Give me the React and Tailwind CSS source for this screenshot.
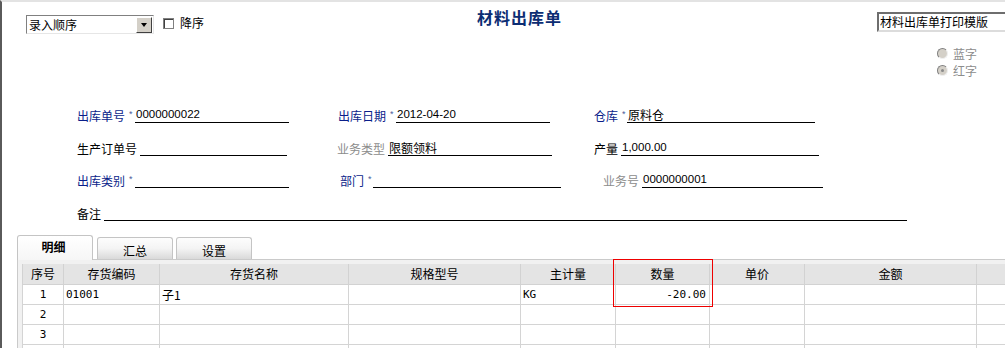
import React from "react";

const cjk = "font-['Noto_Sans_CJK_SC','Noto_Sans_CJK_JP',sans-serif]";
const sans = "font-['Liberation_Sans','Noto_Sans_CJK_SC',sans-serif]";
const mono = "font-['DejaVu_Sans_Mono','Noto_Sans_CJK_SC',monospace]";

function Field({ mlClass = "", labelClass, lineClass, label, colorClass = "text-black", star = false, value, valueCjk = false }) {
  return (
    <div className={`flex items-end ${mlClass}`}>
      <div className={`flex items-end shrink-0 ${labelClass}`}>
        <span className={`${cjk} text-[12px] leading-[14px] ${colorClass} whitespace-nowrap`}>{label}</span>
        {star && (
          <span className={`${sans} text-[9px] leading-[9px] text-[#4a5a9a] ml-[4px] self-start mt-[1px]`}>*</span>
        )}
      </div>
      <div className={`h-[16px] border-b border-black flex items-end pl-[1px] shrink-0 ${lineClass}`}>
        {value && (
          <span className={`${valueCjk ? cjk + " text-[12px]" : sans + " text-[11.5px]"} leading-[15px] text-black whitespace-nowrap`}>{value}</span>
        )}
      </div>
    </div>
  );
}

function Radio({ checked, label }) {
  return (
    <div className="flex items-center h-[17px]">
      <div className="w-[11px] h-[11px] rounded-full border border-t-[#808080] border-l-[#808080] border-r-[#f0f0f0] border-b-[#f0f0f0] bg-[#d4d0c8] flex items-center justify-center">
        {checked && <div className="w-[3px] h-[3px] rounded-full bg-[#8a8a8a]" />}
      </div>
      <span className={`${cjk} text-[12px] leading-[14px] text-[#8c8c8c] ml-[5px]`}>{label}</span>
    </div>
  );
}

const cols = [
  { w: "w-[41px]", h: "序号" },
  { w: "w-[96px]", h: "存货编码" },
  { w: "w-[189px]", h: "存货名称" },
  { w: "w-[172px]", h: "规格型号" },
  { w: "w-[95px]", h: "主计量" },
  { w: "w-[94px]", h: "数量" },
  { w: "w-[95px]", h: "单价" },
  { w: "w-[172px]", h: "金额" },
  { w: "w-[40px]", h: "" },
];

const rows = [
  ["1", "01001", "子1", "", "KG", "-20.00", "", "", ""],
  ["2", "", "", "", "", "", "", "", ""],
  ["3", "", "", "", "", "", "", "", ""],
  ["", "", "", "", "", "", "", "", ""],
];

const blue = "text-[#0a1e8a]";

export default function App() {
  return (
    <div className="w-[1005px] h-[348px] bg-white overflow-hidden relative border-l-2 border-l-[#5a5a5a] border-t-2 border-t-[#e3e3e3]">
      {/* header row */}
      <div className="flex items-start h-[43px]">
        <div className="w-[475px] pl-[24px] flex items-start shrink-0">
          <div className="mt-[13px] w-[128px] h-[19px] border border-t-[#808080] border-l-[#808080] border-r-[#e6e6e6] border-b-[#e6e6e6] flex items-center bg-white">
            <span className={`${cjk} text-[12px] leading-[14px] text-black pl-[2px] flex-1`}>录入顺序</span>
            <div className="w-[16px] h-[16px] mr-[1px] bg-[#d4d0c8] border border-t-[#ffffff] border-l-[#ffffff] border-r-[#404040] border-b-[#404040] flex items-center justify-center">
              <div className="w-0 h-0 border-l-[3.5px] border-r-[3.5px] border-t-[4px] border-l-transparent border-r-transparent border-t-black" />
            </div>
          </div>
          <div className="mt-[16px] ml-[9px] w-[11px] h-[11px] border border-[#808080] bg-white shadow-[inset_1px_1px_0_#404040]" />
          <span className={`${cjk} mt-[14px] ml-[6px] text-[12px] leading-[14px] text-black`}>降序</span>
        </div>
        <div className="w-[400px] shrink-0 mt-[4px]">
          <span className={`${cjk} text-[16px] leading-[20px] font-bold tracking-[1px] text-[#0c2d73]`}>材料出库单</span>
        </div>
        <div className="mt-[10px] w-[132px] h-[20px] shrink-0 border-2 border-t-[#6e6e6e] border-l-[#6e6e6e] border-r-[#dcdcdc] border-b-[#dcdcdc] flex items-center bg-white">
          <span className={`${cjk} text-[12px] leading-[14px] text-black pl-[1px] whitespace-nowrap`}>材料出库单打印模版</span>
        </div>
      </div>

      {/* radios */}
      <div className="pl-[935px] flex flex-col">
        <Radio label="蓝字" />
        <Radio checked label="红字" />
      </div>

      {/* form */}
      <div className="pl-[75px] flex flex-col">
        <div className="flex items-end mt-[28px]">
          <Field labelClass="w-[58px]" lineClass="w-[154px]" label="出库单号" colorClass={blue} star value="0000000022" />
          <Field mlClass="ml-[49px]" labelClass="w-[58px]" lineClass="w-[154px]" label="出库日期" colorClass={blue} star value="2012-04-20" />
          <Field mlClass="ml-[44px]" labelClass="w-[33px]" lineClass="w-[188px]" label="仓库" colorClass={blue} star value="原料仓" valueCjk />
        </div>
        <div className="flex items-end mt-[17px]">
          <Field labelClass="w-[63px]" lineClass="w-[147px]" label="生产订单号" />
          <Field mlClass="ml-[50px]" labelClass="w-[51px]" lineClass="w-[164px]" label="业务类型" colorClass="text-[#8c8c8c]" value="限额领料" valueCjk />
          <Field mlClass="ml-[42px]" labelClass="w-[27px]" lineClass="w-[198px]" label="产量" value="1,000.00" />
        </div>
        <div className="flex items-end mt-[16px]">
          <Field labelClass="w-[58px]" lineClass="w-[154px]" label="出库类别" colorClass={blue} star />
          <Field mlClass="ml-[51px]" labelClass="w-[33px]" lineClass="w-[188px]" label="部门" colorClass={blue} star />
          <Field mlClass="ml-[42px]" labelClass="w-[39px]" lineClass="w-[181px]" label="业务号" colorClass="text-[#8c8c8c]" value="0000000001" />
        </div>
        <div className="flex items-end mt-[17px]">
          <Field labelClass="w-[27px]" lineClass="w-[803px]" label="备注" />
        </div>
      </div>

      {/* tabs */}
      <div className="mt-[14px] pl-[15px] flex items-end h-[24px]">
        <div className="w-[76px] h-[25px] -mb-px relative z-10 rounded-t-[3px] border border-b-0 border-[#c4c4c4] bg-linear-to-b from-white to-[#f6f6f6] flex items-start justify-center pt-[4px]">
          <span className={`${cjk} text-[12px] leading-[14px] font-bold text-black pr-[3px]`}>明细</span>
        </div>
        <div className="ml-[4px] w-[76px] h-[22px] rounded-t-[3px] border border-b-0 border-[#c4c4c4] bg-linear-to-b from-[#fdfdfd] via-[#f4f4f4] to-[#d9d9d9] flex items-start justify-center pt-[6px]">
          <span className={`${cjk} text-[12px] leading-[14px] text-black`}>汇总</span>
        </div>
        <div className="ml-[3px] w-[76px] h-[22px] rounded-t-[3px] border border-b-0 border-[#c4c4c4] bg-linear-to-b from-[#fdfdfd] via-[#f4f4f4] to-[#d9d9d9] flex items-start justify-center pt-[6px]">
          <span className={`${cjk} text-[12px] leading-[14px] text-black`}>设置</span>
        </div>
      </div>

      {/* table */}
      <div className="ml-[15px] border-t border-l border-[#cacaca] bg-[#f1f1f1] pt-[4px] pl-[4px]">
        <div className="flex h-[21px] bg-[#e4e4e4] border-b border-[#d2d2d2]">
          {cols.map((c, i) => (
            <div key={i} className={`${c.w} shrink-0 border-l border-[#d2d2d2] flex items-center justify-center`}>
              <span className={`${cjk} text-[12px] leading-[14px] text-black`}>{c.h}</span>
            </div>
          ))}
        </div>
        {rows.map((r, ri) => (
          <div key={ri} className="flex h-[20px] bg-white border-b border-[#d4d4d4]">
            {cols.map((c, i) => {
              const v = r[i];
              let align = "justify-start pl-[2px]";
              if (i === 0) align = "justify-center";
              if (i === 5) align = "justify-end pr-[3px]";
              const isCjk = /[\u4e00-\u9fff]/.test(v);
              return (
                <div key={i} className={`${c.w} shrink-0 border-l border-[#d4d4d4] bg-white flex items-center ${align}`}>
                  {v && (
                    <span className={`${isCjk ? cjk + " text-[12px]" : mono + " text-[11px]"} leading-[14px] text-black whitespace-nowrap`}>{v}</span>
                  )}
                </div>
              );
            })}
          </div>
        ))}
      </div>

      {/* red highlight */}
      <div className="absolute left-[611px] top-[257px] w-[100px] h-[48px] border border-[#ee0000] pointer-events-none" />
    </div>
  );
}
